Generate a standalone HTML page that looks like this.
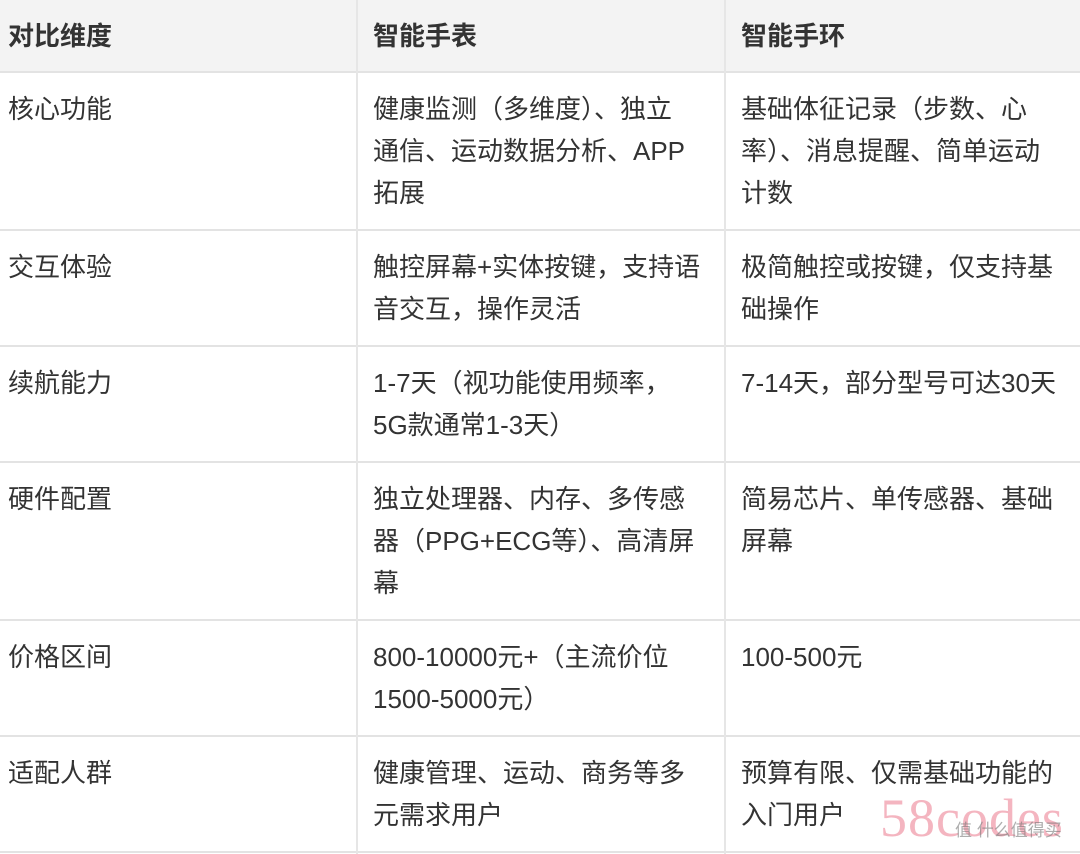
<!DOCTYPE html>
<html><head><meta charset="utf-8"><style>
body{margin:0;width:1080px;height:854px;overflow:hidden;background:#fff;font-family:"Liberation Sans","Noto Sans CJK SC",sans-serif;color:#333;}
.c{position:absolute;font-size:26px;line-height:42px;box-sizing:border-box;white-space:nowrap;}
.h{position:absolute;left:0;top:0;width:1080px;height:72px;background:#f3f3f3;}
.hl{position:absolute;left:0;width:1080px;height:2px;background:#e3e3e3;}
.vl{position:absolute;top:0;width:2px;height:854px;background:#e6e6e6;}
b{font-weight:bold;}
</style></head><body>
<div class="h"></div>
<div class="hl" style="top:71px"></div>
<div class="hl" style="top:229px"></div>
<div class="hl" style="top:345px"></div>
<div class="hl" style="top:461px"></div>
<div class="hl" style="top:619px"></div>
<div class="hl" style="top:735px"></div>
<div class="hl" style="top:851px"></div>
<div class="vl" style="left:356px"></div>
<div class="vl" style="left:724px"></div>

<div class="c" style="left:8px;top:15px"><b>对比维度</b></div>
<div class="c" style="left:373px;top:15px"><b>智能手表</b></div>
<div class="c" style="left:741px;top:15px"><b>智能手环</b></div>

<div class="c" style="left:8px;top:88px">核心功能</div>
<div class="c" style="left:373px;top:88px">健康监测（多维度）、独立<br>通信、运动数据分析、APP<br>拓展</div>
<div class="c" style="left:741px;top:88px">基础体征记录（步数、心<br>率）、消息提醒、简单运动<br>计数</div>

<div class="c" style="left:8px;top:246px">交互体验</div>
<div class="c" style="left:373px;top:246px">触控屏幕+实体按键，支持语<br>音交互，操作灵活</div>
<div class="c" style="left:741px;top:246px">极简触控或按键，仅支持基<br>础操作</div>

<div class="c" style="left:8px;top:362px">续航能力</div>
<div class="c" style="left:373px;top:362px">1-7天（视功能使用频率，<br>5G款通常1-3天）</div>
<div class="c" style="left:741px;top:362px">7-14天，部分型号可达30天</div>

<div class="c" style="left:8px;top:478px">硬件配置</div>
<div class="c" style="left:373px;top:478px">独立处理器、内存、多传感<br>器（PPG+ECG等）、高清屏<br>幕</div>
<div class="c" style="left:741px;top:478px">简易芯片、单传感器、基础<br>屏幕</div>

<div class="c" style="left:8px;top:636px">价格区间</div>
<div class="c" style="left:373px;top:636px">800-10000元+（主流价位<br>1500-5000元）</div>
<div class="c" style="left:741px;top:636px">100-500元</div>

<div class="c" style="left:8px;top:752px">适配人群</div>
<div class="c" style="left:373px;top:752px">健康管理、运动、商务等多<br>元需求用户</div>
<div class="c" style="left:741px;top:752px">预算有限、仅需基础功能的<br>入门用户</div>

<div style="position:absolute;left:880px;top:788px;font-family:'Liberation Serif',serif;font-size:54px;line-height:60px;color:rgba(235,120,140,0.55);letter-spacing:1px">58codes</div>
<div style="position:absolute;left:955px;top:820px;font-size:17px;line-height:22px;color:rgba(120,120,120,0.6)">值 什么值得买</div>
</body></html>
